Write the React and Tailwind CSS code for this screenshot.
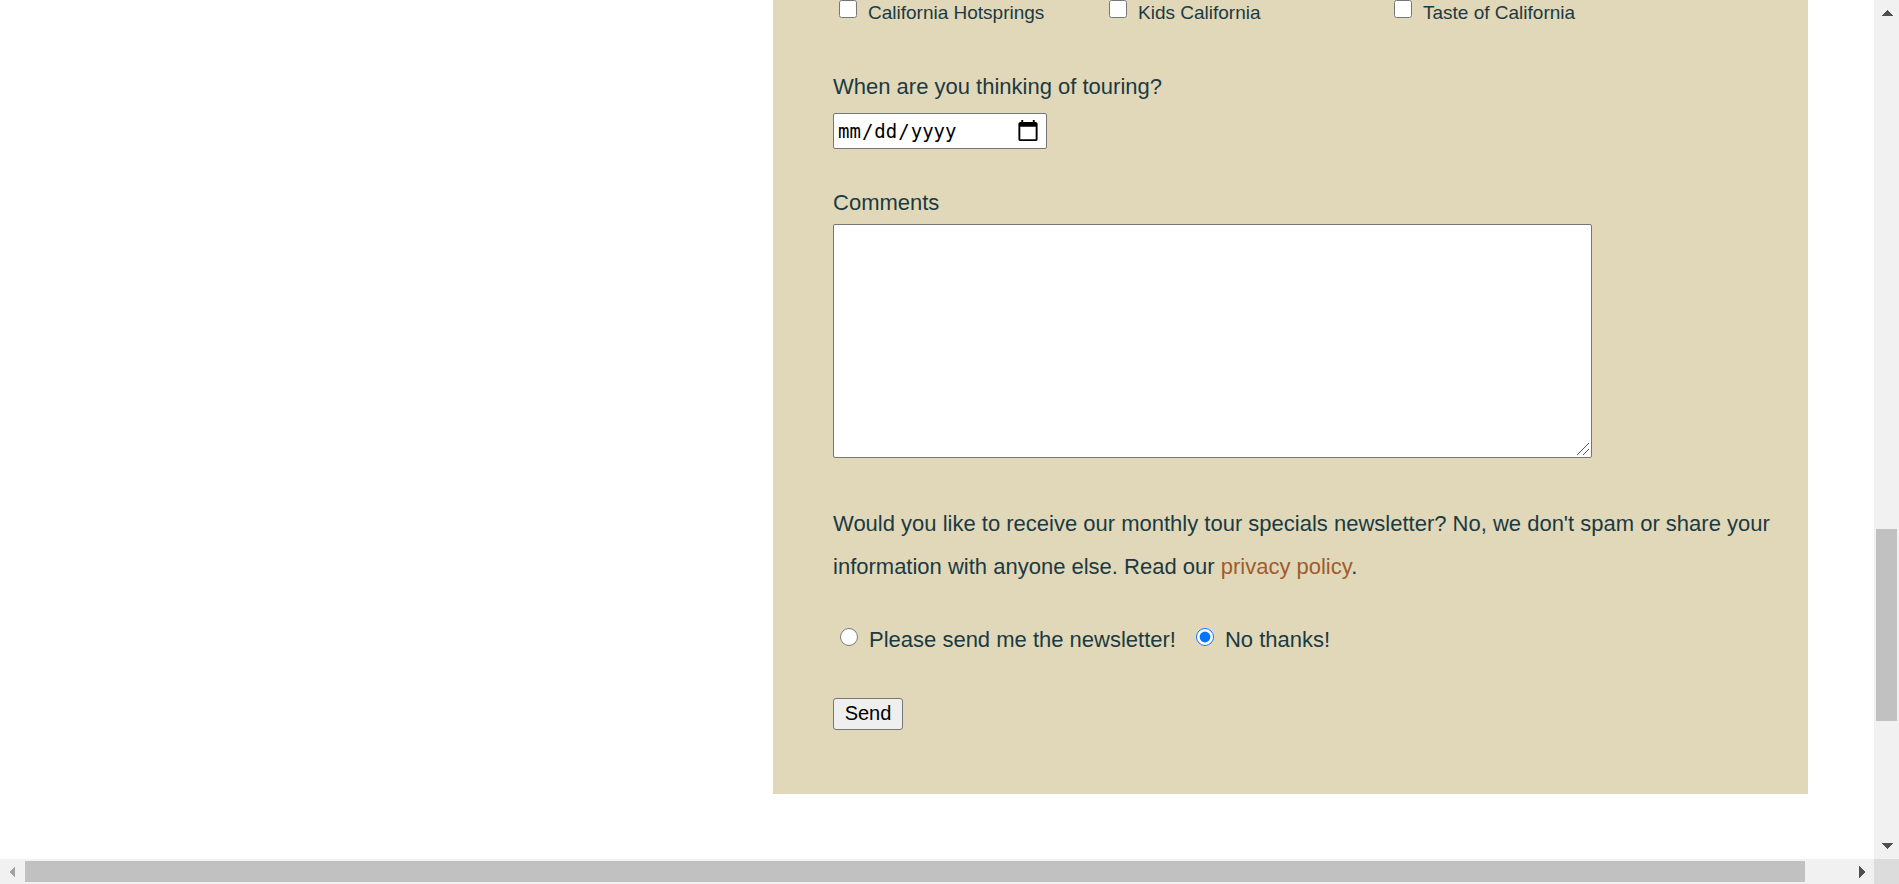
const tours = [
  { id: "hotsprings", name: "California Hotsprings", width: "w-[270px]" },
  { id: "kids", name: "Kids California", width: "w-[285px]" },
  { id: "taste", name: "Taste of California", width: "w-[240px]" },
];

const choices = [
  { id: "news-yes", name: "Please send me the newsletter!", checked: false },
  { id: "news-no", name: "No thanks!", checked: true },
];

const arrows = {
  up: "M0 6 6 0l6 6z",
  down: "M0 0h12L6 6z",
  left: "M6 0v12L0 6z",
  right: "M0 0v12l6-6z",
};

function Arrow({ direction, className }) {
  const vertical = direction === "up" || direction === "down";
  return (
    <svg
      className={className}
      width={vertical ? 12 : 6}
      height={vertical ? 6 : 12}
      viewBox={vertical ? "0 0 12 6" : "0 0 6 12"}
      fill="currentColor"
      shapeRendering="crispEdges"
      aria-hidden="true"
    >
      <path d={arrows[direction]} />
    </svg>
  );
}

function TourForm() {
  return (
    <form
      className="ml-[41.25%] mr-[66px] bg-[#e1d8b9] pr-6 pb-16 pl-[60px] text-[22px] leading-[26px] text-[#1c3a42]"
      onSubmit={(event) => event.preventDefault()}
    >
      <div className="flex text-[19px] leading-[26px]">
        {tours.map((tour) => (
          <div key={tour.id} className={`flex shrink-0 items-start pl-[6px] ${tour.width}`}>
            <input
              id={tour.id}
              type="checkbox"
              className="size-[18px] shrink-0"
            />
            <label htmlFor={tour.id} className="pl-[11px] whitespace-nowrap">
              {tour.name}
            </label>
          </div>
        ))}
      </div>

      <label htmlFor="date" className="mt-12 block">
        When are you thinking of touring?
      </label>
      <input
        id="date"
        type="date"
        className="mt-[13px] block h-9 w-[214px] rounded-[2px] border border-[#767676] bg-white pr-0 pl-[3px] font-['DejaVu_Sans_Mono',monospace] text-[19px] text-black [&::-webkit-calendar-picker-indicator]:mr-1 [&::-webkit-calendar-picker-indicator]:size-6"
      />

      <label htmlFor="comments" className="mt-[41px] block">
        Comments
      </label>
      <div className="relative mt-2 w-[759px] max-w-full">
        <textarea
          id="comments"
          className="block h-[234px] w-full resize-none rounded-[2px] border border-[#767676] bg-white"
        />
        <svg
          className="pointer-events-none absolute right-[3px] bottom-[3px]"
          width="12"
          height="12"
          viewBox="0 0 12 12"
          fill="none"
          stroke="#555"
          aria-hidden="true"
        >
          <path d="M0 12 12 0M6 12l6-6" />
        </svg>
      </div>

      <p className="mt-11 leading-[43px]">
        Would you like to receive our monthly tour specials newsletter? No, we don't spam or share
        your information with anyone else. Read our{" "}
        <a href="#privacy" className="text-[#a05c2c]">
          privacy policy
        </a>
        .
      </p>

      <div className="mt-[39px] flex gap-5 pl-[7px]">
        {choices.map((choice) => (
          <div key={choice.id} className="flex items-start">
            <input
              id={choice.id}
              type="radio"
              name="newsletter"
              defaultChecked={choice.checked}
              className="mt-px size-[18px] accent-[#0075ff]"
            />
            <label htmlFor={choice.id} className="pl-[11px]">
              {choice.name}
            </label>
          </div>
        ))}
      </div>

      <button
        type="submit"
        className="mt-[45px] block h-8 w-[70px] rounded-[3px] border border-[#767676] bg-[#efefef] pb-[2px] text-[20px] leading-none text-black"
      >
        Send
      </button>
    </form>
  );
}

export default function App() {
  return (
    <div className="grid h-screen grid-cols-[1fr_25px] grid-rows-[1fr_25px] overflow-hidden bg-white font-['Liberation_Sans',Arial,sans-serif]">
      <main className="min-w-0 overflow-hidden">
        <TourForm />
      </main>

      <div className="flex flex-col items-center bg-[#f1f1f1] text-[#505050]" aria-hidden="true">
        <Arrow direction="up" className="mt-[10px] shrink-0" />
        <div className="grow-[513]" />
        <div className="h-48 w-[21px] shrink-0 bg-[#c1c1c1]" />
        <div className="grow-[122]" />
        <Arrow direction="down" className="mb-[10px] shrink-0" />
      </div>

      <div className="flex items-center bg-[#f1f1f1] text-[#505050]" aria-hidden="true">
        <Arrow direction="left" className="mr-[10px] ml-[9px] shrink-0 text-[#a3a3a3]" />
        <div className="h-[21px] grow bg-[#c1c1c1]" />
        <Arrow direction="right" className="mr-[9px] ml-[54px] shrink-0" />
      </div>

      <div className="bg-[#dcdcdc]" aria-hidden="true" />
    </div>
  );
}
